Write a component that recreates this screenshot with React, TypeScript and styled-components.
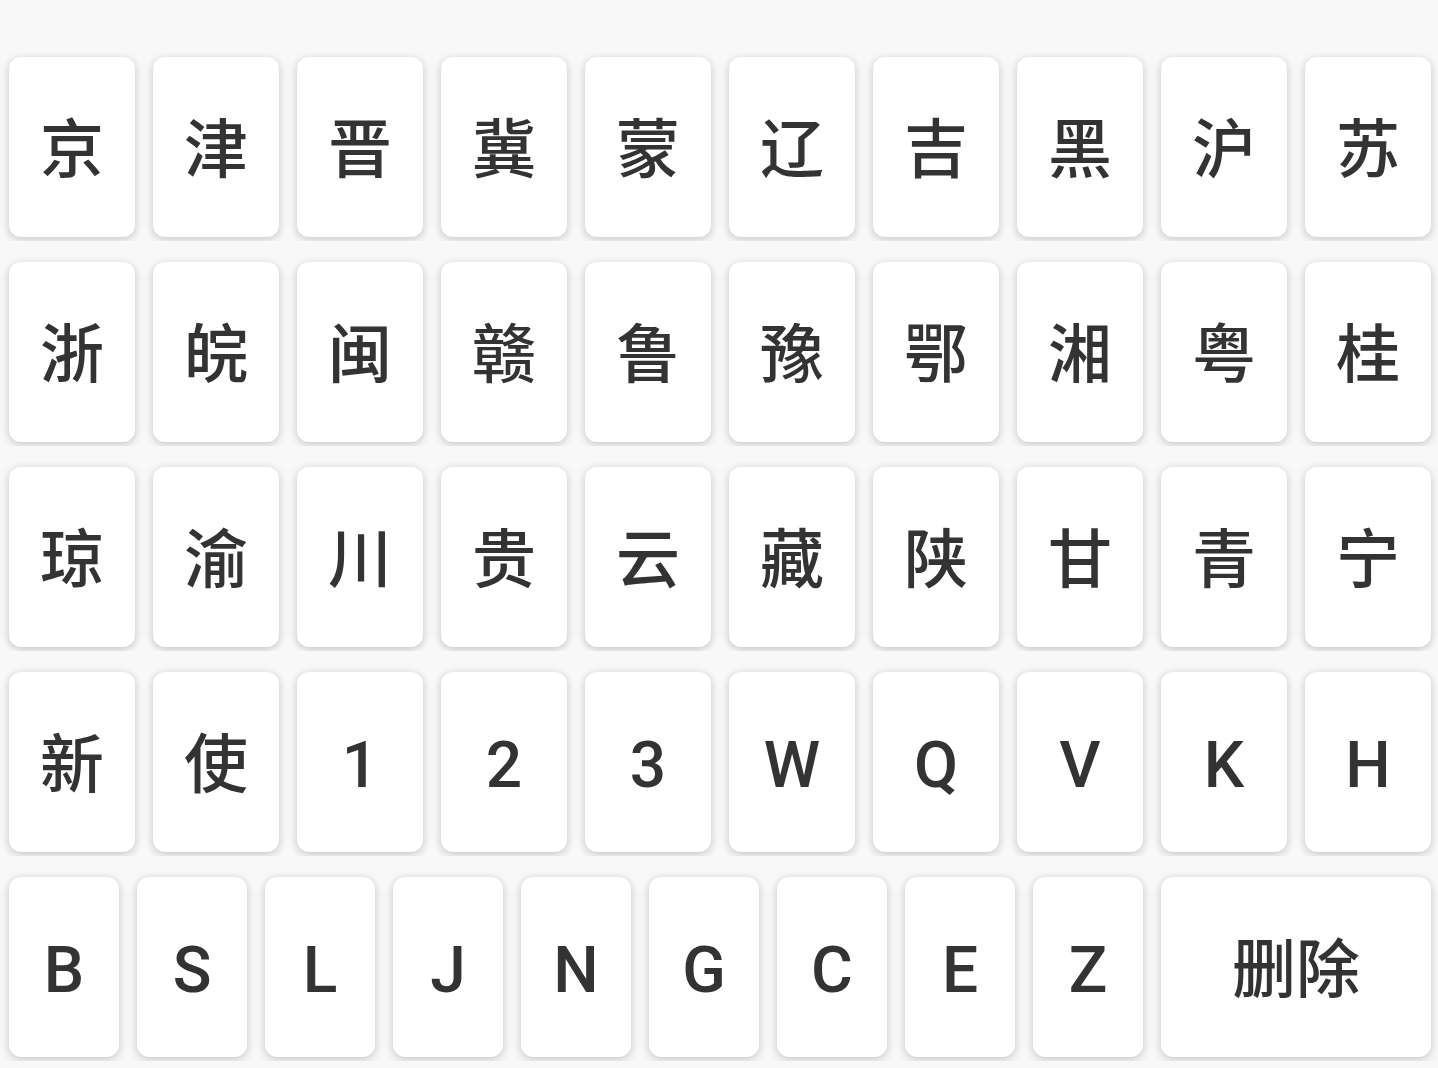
import React from "react";
import styled, { createGlobalStyle } from "styled-components";

const GlobalStyle = createGlobalStyle`
  html, body {
    margin: 0;
    padding: 0;
    background: #f8f8f8;
  }
  body {
    font-family: Roboto, "Noto Sans CJK SC", sans-serif;
  }
`;

const Keyboard = styled.div`
  width: 1438px;
  height: 1068px;
  padding-top: 36px;
  box-sizing: border-box;
  background: #f8f8f8;
  display: flex;
  flex-direction: column;
  overflow: hidden;
`;

const Row = styled.div`
  display: flex;
  gap: 18px;
  padding: 21px 7px 4px 9px;
  overflow: hidden;
`;

const Key = styled.div<{ $wide?: boolean }>`
  flex: ${(p) => (p.$wide ? "0 0 270px" : "1 1 0")};
  height: 180px;
  min-width: 0;
  box-sizing: border-box;
  padding-top: 8px;
  background: #ffffff;
  border-radius: 12px;
  box-shadow: 0 2px 8px rgba(0, 0, 0, 0.22);
  display: flex;
  align-items: center;
  justify-content: center;
  font-family: Roboto, "Noto Sans CJK SC", sans-serif;
  font-size: 64px;
  font-weight: 500;
  color: #333333;
  user-select: none;
`;

const Label = styled.span`
  line-height: 1;
`;

const rows: string[][] = [
  ["京", "津", "晋", "冀", "蒙", "辽", "吉", "黑", "沪", "苏"],
  ["浙", "皖", "闽", "赣", "鲁", "豫", "鄂", "湘", "粤", "桂"],
  ["琼", "渝", "川", "贵", "云", "藏", "陕", "甘", "青", "宁"],
  ["新", "使", "1", "2", "3", "W", "Q", "V", "K", "H"],
];

const lastRow = ["B", "S", "L", "J", "N", "G", "C", "E", "Z"];

export default function App() {
  return (
    <>
      <GlobalStyle />
      <Keyboard>
        {rows.map((r, i) => (
          <Row key={i}>
            {r.map((k) => (
              <Key key={k}>
                <Label>{k}</Label>
              </Key>
            ))}
          </Row>
        ))}
        <Row>
          {lastRow.map((k) => (
            <Key key={k}>
              <Label>{k}</Label>
            </Key>
          ))}
          <Key $wide>
            <Label>删除</Label>
          </Key>
        </Row>
      </Keyboard>
    </>
  );
}
